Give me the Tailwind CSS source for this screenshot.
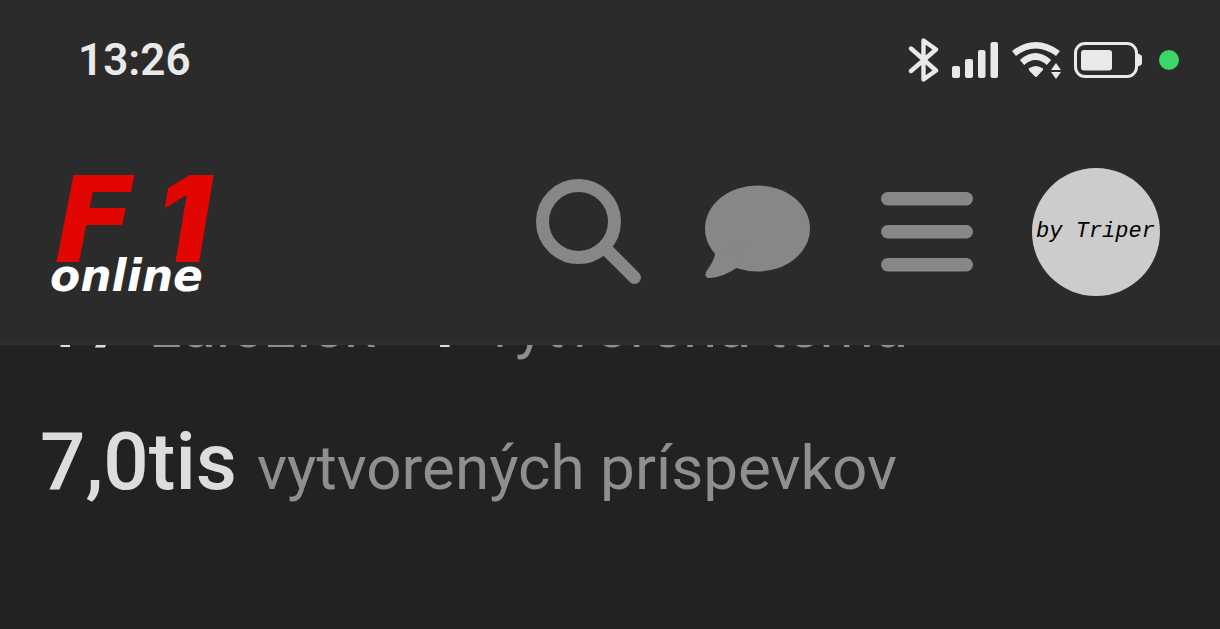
<!DOCTYPE html>
<html lang="sk">
<head>
    <meta charset="UTF-8" />
    <meta name="viewport" content="width=device-width, initial-scale=1.0" />
    <title>F1online - Profil</title>
    <script src="https://cdn.jsdelivr.net/npm/@tailwindcss/browser@4"></script>
</head>
<body class="bg-[#222222] font-[Roboto,sans-serif] min-h-screen overflow-hidden">

<div class="relative z-10 bg-[#2b2b2b] border-b-2 border-[#303030]">
    <!-- status bar -->
    <div class="flex items-center justify-between h-[120px] pl-[78px] pr-[41px] text-[#e9e9e9]">
        <span class="text-[44px] leading-none font-semibold">13:26</span>
        <div class="flex items-center gap-[13px]">
            <svg class="w-8 h-11" viewBox="0 0 32 44" fill="none" stroke="currentColor" stroke-width="4.4" stroke-linejoin="round" stroke-linecap="round">
                <path d="M4 10.500L29 32.500L16.500 41.500V2.500L29 11.500L4 33" />
            </svg>
            <svg class="w-[46px] h-11" viewBox="0 0 46 44" fill="currentColor">
                <rect x="0" y="28" width="8" height="12" rx="2" />
                <rect x="13" y="21" width="8" height="19" rx="2" />
                <rect x="26" y="12" width="7.500" height="28" rx="2" />
                <rect x="38.500" y="4" width="7.500" height="36" rx="2" />
            </svg>
            <svg class="w-[50px] h-11" viewBox="0 0 50 44">
                <path d="M3 15.500Q24.500 -1 47 15.500" fill="none" stroke="currentColor" stroke-width="6.500" />
                <path d="M11 24.500Q24.500 12.500 38 24.500" fill="none" stroke="currentColor" stroke-width="6.500" />
                <path d="M17.500 30.500Q25 25.500 32 30.500Q32.500 32 31 33L26 38.500Q25 39.500 24 38.500L18.500 33Z" fill="currentColor" />
                <path d="M45 25L50 32H40ZM40 34H50L45 41Z" fill="currentColor" />
            </svg>
            <svg class="w-[68px] h-11" viewBox="0 0 68 44">
                <rect x="1.500" y="5.500" width="61" height="33" rx="9.500" fill="none" stroke="currentColor" stroke-width="3" />
                <rect x="7" y="12" width="31" height="20.500" rx="3" fill="currentColor" />
                <path d="M63 15.500Q68 16.500 68 19V25Q68 27.500 63 28.500Z" fill="currentColor" />
            </svg>
            <span class="ml-1 w-5 h-5 rounded-full bg-[#3bd568]"></span>
        </div>
    </div>

    <!-- site header -->
    <header class="flex items-center justify-between h-[223px] px-10">
        <a href="#" class="flex flex-col pl-[10px] font-['DejaVu_Sans',sans-serif] font-bold italic whitespace-nowrap">
            <span class="flex items-baseline gap-5 pl-1 text-[120px] leading-[90px] text-[#e10600]">F<span class="font-[Inter,sans-serif] font-black">1</span></span>
            <span class="text-[44px] leading-5 pb-1 text-white">online</span>
        </a>
        <nav class="flex items-center text-[#878787]">
            <button type="button" aria-label="Hľadať" class="flex justify-center w-[169px]">
                <svg class="w-[106px] h-[106px]" viewBox="0 0 106 106" fill="none" stroke="currentColor">
                    <circle cx="42.500" cy="42.500" r="36" stroke-width="13" />
                    <path d="M69 69L98.500 98.500" stroke-width="13" stroke-linecap="round" />
                </svg>
            </button>
            <button type="button" aria-label="Správy" class="flex justify-center w-[169px]">
                <svg class="w-[106px] h-[94px]" viewBox="0 0 106 94" fill="currentColor">
                    <ellipse cx="52.500" cy="43.500" rx="52.500" ry="43" />
                    <path d="M10 67Q11 73 1 87Q-1 93 5 93Q19 92 33 82L40 60Z" />
                </svg>
            </button>
            <button type="button" aria-label="Menu" class="flex justify-center w-[169px]">
                <svg class="w-[92px] h-20" viewBox="0 0 92 80" fill="currentColor">
                    <rect y="0" width="92" height="13.500" rx="6.750" />
                    <rect y="33" width="92" height="13.500" rx="6.750" />
                    <rect y="66" width="92" height="13.500" rx="6.750" />
                </svg>
            </button>
            <button type="button" aria-label="Profil" class="flex justify-center w-[169px]">
                <span class="flex items-center justify-center w-32 h-32 rounded-full bg-[#cccccc] text-black text-[22px] font-['Liberation_Mono',monospace] italic whitespace-nowrap">by Triper</span>
            </button>
        </nav>
    </header>
</div>

<!-- user stats, scrolled under the header -->
<main class="-mt-[75px] px-10 flex flex-col gap-9 text-[#8f8f8f] text-[62px] leading-[100px] whitespace-nowrap">
    <div class="flex items-baseline gap-11">
        <p class="flex items-baseline gap-5"><span class="text-[80px] font-medium text-[#dddddd]">17</span> záložiek</p>
        <p class="flex items-baseline gap-5"><span class="text-[80px] font-medium text-[#dddddd]">1</span> vytvorená téma</p>
    </div>
    <p class="flex items-baseline gap-5"><span class="text-[80px] font-medium text-[#dddddd]">7,0tis</span> vytvorených príspevkov</p>
</main>

</body>
</html>
